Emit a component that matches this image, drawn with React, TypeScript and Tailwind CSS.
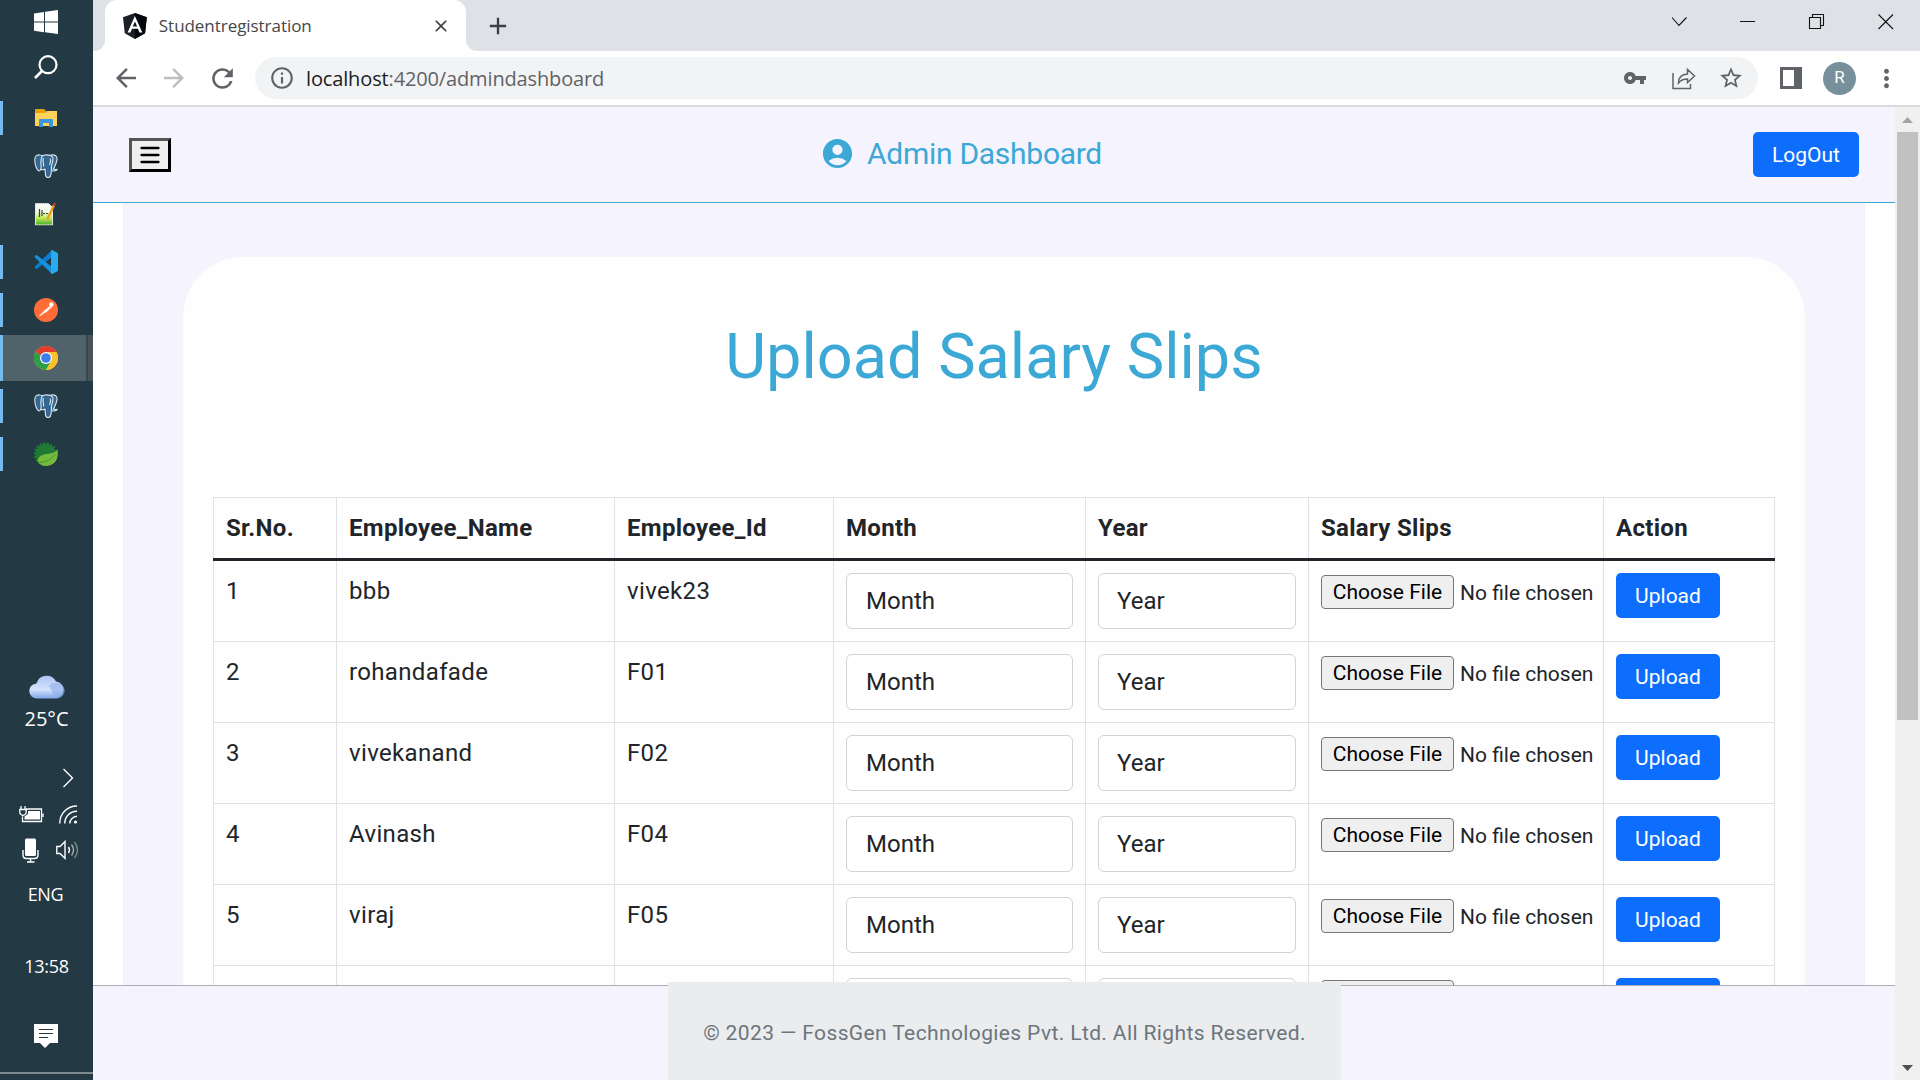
import React from "react";
import {
  MdArrowBack,
  MdArrowForward,
  MdRefresh,
  MdInfoOutline,
  MdVpnKey,
  MdStarBorder,
  MdMoreVert,
  MdAccountCircle,
  MdClose,
  MdAdd,
} from "react-icons/md";

const employees = [
  { no: 1, name: "bbb", id: "vivek23" },
  { no: 2, name: "rohandafade", id: "F01" },
  { no: 3, name: "vivekanand", id: "F02" },
  { no: 4, name: "Avinash", id: "F04" },
  { no: 5, name: "viraj", id: "F05" },
];

const columns = ["Sr.No.", "Employee_Name", "Employee_Id", "Month", "Year", "Salary Slips", "Action"];

function WindowsIcon() {
  return (
    <svg width="24" height="24" viewBox="0 0 24 24" fill="#fff">
      <path d="M0 3.4 10 2v9.6H0zM11 1.8 24 0v11.6H11zM0 12.6h10v9.6L0 20.8zM11 12.6h13V24l-13-1.8z" />
    </svg>
  );
}

function SearchIcon() {
  return (
    <svg width="24" height="24" viewBox="0 0 24 24" fill="none" stroke="#fff" strokeWidth="2.2">
      <circle cx="14" cy="9.7" r="8.5" />
      <path d="M8 16 1 23" strokeWidth="2.6" />
    </svg>
  );
}

function FolderIcon() {
  return (
    <svg width="22" height="20" viewBox="0 0 22 20">
      <path d="M0 1h9l2 2v3H0z" fill="#e8a200" />
      <path d="M0 5h10l2-2h10v15H0z" fill="#ffd35b" />
      <path d="M4 19v-7q0-1 1-1h12q1 0 1 1v7h-4v-4H8v4z" fill="#3a96dd" />
    </svg>
  );
}

function ElephantIcon() {
  return (
    <svg width="24" height="24" viewBox="0 0 24 24" fill="#336791" stroke="#dbe6ed" strokeWidth="1.1" strokeLinejoin="round">
      <path d="M6 1C2 .3.5 3 .8 7c.3 4 2 9.500 4 10 1.300.2 2-1.500 3-2.500L9 2.500Q8 1 6 1z" />
      <path d="M17 1c4-.6 6.500 1 6 4.600-.4 3.400-2 6.400-3.600 9.400 1.500.7 2.800.5 3.800.3-.6 1.500-3 2-5.200 1.500L15 5z" />
      <path d="M8 2.500c1-2 8-2.500 10.500.500 1.500 3-.500 6-1 9-.3 3 .3 7-1 10-.800 2-4 2-4.700 0-.700-2-.4-5-.8-7-1 1-3.300 1-4.300 0C8 12 5.500 8 8 2.500z" />
      <path d="M9.500 4c-1.500 3 .5 5 0 8.500M16 4.500c1.500 2 0 4.500-.5 6.500" fill="none" />
    </svg>
  );
}

function NotepadIcon() {
  return (
    <svg width="24" height="24" viewBox="0 0 24 24">
      <defs>
        <linearGradient id="npp" x1="0" y1="0" x2="0" y2="1">
          <stop offset="0.35" stopColor="#f7fbef" />
          <stop offset="0.7" stopColor="#b5e84b" />
          <stop offset="1" stopColor="#3fae29" />
        </linearGradient>
      </defs>
      <path d="M1.500 1.500h13l4 4v17.500h-17z" fill="url(#npp)" stroke="#e4e6e4" />
      <path d="M2 1.500h13" stroke="#b9bcb9" strokeDasharray="1 1" />
      <path d="M1 23.500h18" stroke="#56615b" />
      <path d="M5.500 7v8M8 8v6M9 11.500h2M12 11.500h2" stroke="#3b4438" strokeWidth="1.200" />
      <path d="m13 18 7-15" stroke="#e9a31b" strokeWidth="2.400" />
      <path d="m20 3.500 1.200-2.700" stroke="#a33b3b" strokeWidth="2.400" />
      <path d="m13.300 17-.8 2.500" stroke="#d9b98a" />
    </svg>
  );
}

function CodeIcon() {
  return (
    <svg width="24" height="24" viewBox="0 0 24 24">
      <path d="M1 16.500 18 0v7L3 18.800q-.7.300-1.200-.1l-1-.9q-.5-.7.200-1.300z" fill="#0a7fcf" />
      <path d="M1 7.600 18 24v-7L3 5.200q-.7-.3-1.200.1l-1 .9Q.3 7 1 7.600z" fill="#1592dc" />
      <path d="M18 0q-.8 0-1 .8v22.400q.2.900 1 .8l5-2.400q1-.5 1-1.500V3.900q0-1-1-1.500z" fill="#2aabf0" />
    </svg>
  );
}

function PostmanIcon() {
  return (
    <svg width="24" height="24" viewBox="0 0 24 24">
      <circle cx="12" cy="12" r="12" fill="#ff6c37" />
      <circle cx="17.300" cy="6.500" r="2.200" fill="#fff" />
      <path d="m15.500 8.200 1.700 1.200-4.800 4.900-4 1.200 1.400-2.600z" fill="#fff" />
      <path d="m9.500 14-4 3.800 4.500-2.600M16.500 9 18 10" stroke="#fff" strokeWidth="0.900" fill="none" />
    </svg>
  );
}

function ChromeIcon() {
  return (
    <svg width="24" height="24" viewBox="0 0 24 24">
      <circle cx="12" cy="12" r="12" fill="#fbc02d" />
      <path d="M12 12 1.600 6A12 12 0 0 1 22.400 6z" fill="#e33b2e" />
      <path d="M12 12 1.600 6A12 12 0 0 0 12 24l5.200-9z" fill="#2f9e4c" />
      <path d="M12 6h10.400A12 12 0 0 1 12 24l5.200-9z" fill="#fbc02d" />
      <circle cx="12" cy="12" r="6" fill="#fff" />
      <circle cx="12" cy="12" r="4.800" fill="#3b7ded" />
    </svg>
  );
}

function SpringIcon() {
  return (
    <svg width="24" height="24" viewBox="0 0 24 24">
      <circle cx="11.500" cy="12" r="10.200" fill="#1f7a35" />
      <circle cx="11.500" cy="12" r="10.800" fill="none" stroke="#1f7a35" strokeWidth="2" strokeDasharray="2.200 1.500" />
      <path d="M23.500 7.500c1.500 9-2 16-11 16.500C8 24 5 22 3.500 19.500 4 14 8.500 12.500 13 12c5-.5 8-1.500 10.500-4.500z" fill="#76bc3c" />
      <path d="M4.500 20.500C11 20.500 17 18 21 12.500" fill="none" stroke="#3c8f35" strokeWidth="1" />
    </svg>
  );
}

const tasks = [
  { icon: <FolderIcon />, open: true },
  { icon: <ElephantIcon />, open: false },
  { icon: <NotepadIcon />, open: false },
  { icon: <CodeIcon />, open: true },
  { icon: <PostmanIcon />, open: true },
  { icon: <ChromeIcon />, open: true, active: true },
  { icon: <ElephantIcon />, open: true },
  { icon: <SpringIcon />, open: true },
];

function Taskbar() {
  return (
    <aside className="flex h-full w-[93px] shrink-0 flex-col bg-[#233943] font-['Open_Sans',sans-serif] text-white">
      <div className="flex h-[44px] items-center pl-[34px]"><WindowsIcon /></div>
      <div className="flex h-[46px] items-center pl-[34px]"><SearchIcon /></div>
      <div className="mt-1 flex flex-col">
        {tasks.map((t, i) => (
          <div key={i} className="flex h-12 items-center">
            <div className={t.open ? (t.active ? "h-[46px] w-[3px] bg-[#76b9ed]" : "h-[34px] w-[3px] bg-[#76b9ed]") : "w-[3px]"} />
            <div className={t.active ? "flex h-[46px] w-[83px] items-center justify-center bg-[#50626a] pr-[9px]" : "flex h-[46px] w-[83px] items-center justify-center pr-[9px]"}>
              <div className="ml-[12px]">{t.icon}</div>
            </div>
            {t.active && <div className="h-[46px] w-[7px] border-l-2 border-[#35474f] bg-[#485459]" />}
          </div>
        ))}
      </div>
      <svg className="mt-[197px] ml-[29px]" width="36" height="24" viewBox="0 0 36 24">
        <defs>
          <linearGradient id="cloud" x1="0" y1="0" x2="0" y2="1">
            <stop offset="0" stopColor="#a9c5f6" />
            <stop offset="0.600" stopColor="#d5e2fa" />
            <stop offset="1" stopColor="#7fa5ea" />
          </linearGradient>
        </defs>
        <path d="M8 23.500a7.500 7.500 0 0 1-.5-15A10.500 10.500 0 0 1 27 6.600a8.500 8.500 0 0 1 0 16.900z" fill="url(#cloud)" />
        <path d="M20 11a9 9 0 0 1 15.800 4c.2 5-3.800 8.500-8.800 8.500z" fill="#86a9e8" opacity="0.550" />
      </svg>
      <div className="mt-[8px] h-[24px] text-center text-[20px] leading-[24px]">25°C</div>
      <svg className="mt-[37px] ml-[62px]" width="12" height="20" viewBox="0 0 12 20" fill="none" stroke="#fff" strokeWidth="1.400">
        <path d="m1.500 1 9 9-9 9" />
      </svg>
      <div className="mt-[15px] flex h-[22px] items-center">
        <svg className="ml-[19px]" width="25" height="19" viewBox="0 0 25 19" fill="none" stroke="#fff" strokeWidth="1.300">
          <path d="M7 4h15.500v12.500H3.500v-5M24 8.500v3.500M2 1v3M6 1v3M.8 4.500h6.400V8Q6 10.500 4 10.500T.8 8z" />
          <path d="M9 6h12v8.500H5.500v-3L9 9z" fill="#fff" stroke="none" />
        </svg>
        <svg className="ml-[15px]" width="19" height="19" viewBox="0 0 19 19" fill="none" stroke="#fff" strokeWidth="1.400">
          <path d="M.8 18.500A17 17 0 0 1 18 1M5.800 18.500A12 12 0 0 1 18 6.200M10.800 18.500A7.500 7.500 0 0 1 18 11.200" />
          <circle cx="16.500" cy="17" r="1.600" fill="#fff" stroke="none" />
        </svg>
      </div>
      <div className="mt-[12px] flex h-[26px] items-center">
        <svg className="ml-[22px]" width="17" height="25" viewBox="0 0 17 25" fill="none" stroke="#fff" strokeWidth="1.400">
          <rect x="3" y="0.500" width="11" height="17.500" rx="1.500" fill="#fff" stroke="none" />
          <path d="M1 12v5q0 3.500 3.500 3.500h8Q16 20.500 16 17v-5M8.500 20.500V24M5 24h7.500" />
        </svg>
        <svg className="ml-[17px]" width="23" height="20" viewBox="0 0 23 20" fill="none" stroke="#fff" strokeWidth="1.400">
          <path d="M.8 6.500v7H4l5 4.800V1.500l-5 5z" />
          <path d="M12.500 7q2 3 0 6" />
          <path d="M15.500 4.500q4 5.500 0 11" opacity="0.600" />
          <path d="M18.500 2q6 8 0 16" opacity="0.400" />
        </svg>
      </div>
      <div className="mt-[19px] h-[24px] pr-[2px] text-center text-[18px] leading-[24px] tracking-[-0.4px]">ENG</div>
      <div className="mt-[48px] h-[24px] text-center text-[18px] leading-[24px] tracking-[-0.3px]">13:58</div>
      <svg className="mt-[46px] ml-[34px]" width="24" height="25" viewBox="0 0 24 25">
        <path d="M0 0h24v19h-8l-5 5-5-5H0z" fill="#fff" />
        <path d="M5 5.500h14M5 9.500h14M5 13.500h9" stroke="#233943" />
      </svg>
      <div className="mt-[23px] h-[2px] bg-[#7b888d]" />
    </aside>
  );
}

function TabStrip() {
  return (
    <div className="flex h-[51px] shrink-0 bg-[#dee1e6]">
      <div className="flex h-full w-3 items-end bg-white">
        <div className="h-full w-full rounded-br-[11px] bg-[#dee1e6]" />
      </div>
      <div className="flex w-[361px] items-center bg-[#dee1e6]">
        <div className="flex h-full w-full items-center rounded-t-[12px] bg-white">
          <svg className="ml-[18px]" width="24" height="26" viewBox="0 0 24 26">
            <path d="m12 0 12 4.300-1.800 16L12 26 1.800 20.300 0 4.300z" fill="#1b1f27" />
            <path d="m12 0 12 4.300-1.800 16L12 26z" fill="#05070d" />
            <path fillRule="evenodd" d="m12 3 7.400 16.500h-2.900L15 15.800H9l-1.500 3.700H4.600zm0 5.500-2.200 5h4.400z" fill="#fff" />
          </svg>
          <span className="ml-[12px] w-[274px] font-['Open_Sans',sans-serif] text-[17px] tracking-[-0.05px] whitespace-nowrap text-[#45474a]">Studentregistration</span>
          <MdClose className="mr-[15px] size-[20px] shrink-0 text-[#3c4043]" />
        </div>
      </div>
      <div className="flex w-3 items-end bg-white">
        <div className="h-full w-full rounded-bl-[11px] bg-[#dee1e6]" />
      </div>
      <div className="flex w-[34px] items-center justify-end"><MdAdd className="size-[28px] shrink-0 text-[#3c4043]" /></div>
      <svg className="ml-auto" width="248" height="51" viewBox="0 0 248 51" fill="none" stroke="#111" strokeWidth="1.100">
        <path d="m0 17.500 7 8 7.500-8M68 21.500h15M137.500 17.500h11v11h-11zM140.500 17v-2.500h11v11h-2.500M206.500 14.500l14.500 14.500M221 14.500 206.500 29" />
      </svg>
    </div>
  );
}

function Toolbar() {
  return (
    <div className="flex h-[56px] shrink-0 items-center border-b-2 border-[#d9dadd] bg-white text-[#5f6368]">
      <MdArrowBack className="ml-[18px] size-[30px]" />
      <MdArrowForward className="ml-[18px] size-[30px] text-[#bcbec1]" />
      <MdRefresh className="ml-[18px] size-[31px]" />
      <div className="ml-[17px] flex h-[42px] w-[1503px] items-center rounded-full bg-[#f1f3f4]">
        <MdInfoOutline className="ml-[14px] size-[26px]" />
        <span className="ml-[11px] pt-[2px] font-['Open_Sans',sans-serif] text-[20px] tracking-[-0.14px] whitespace-nowrap"><span className="text-[#202124]">localhost</span>:4200/admindashboard</span>
        <MdVpnKey className="ml-auto size-[24px]" />
        <svg className="ml-[25px]" width="24" height="23" viewBox="0 0 24 23" fill="none" stroke="#5f6368" strokeWidth="1.500">
          <path d="M1 6v15.500h17.500V17M6.500 16q0-8.500 9-9V2.500l7 6.500-7 6.500V12q-6 0-9 4z" />
        </svg>
        <MdStarBorder className="mr-[14px] ml-[22px] size-[26px]" />
      </div>
      <svg className="ml-[22px]" width="22" height="22" viewBox="0 0 22 22">
        <path fillRule="evenodd" d="M0 0h22v22H0zm3 3v16h11V3z" fill="#5f6368" />
      </svg>
      <div className="ml-[21px] flex size-[33px] items-center justify-center rounded-full bg-[#78909c] font-['Roboto',sans-serif] text-[17px] text-white">R</div>
      <MdMoreVert className="ml-[16px] size-[29px]" />
    </div>
  );
}

const rowGrid = "grid grid-cols-[123px_278px_219px_252px_223px_295px_172px]";

function SlipTable() {
  return (
    <div className="w-[1562px] text-[#212529]">
      <div className={rowGrid + " h-[64px] border-t border-b-[3px] border-t-[#dee2e6] border-b-[#212529]"}>
        {columns.map((c) => (
          <div key={c} className="border-l border-[#dee2e6] pt-[12px] pl-[12px] text-[24px] leading-[36px] font-bold tracking-[0.3px] whitespace-nowrap last:border-r">{c}</div>
        ))}
      </div>
      {employees.map((e) => (
        <div key={e.no} className={rowGrid + " h-[81px] border-b border-[#dee2e6] text-[24px] leading-[36px] *:border-l *:border-[#dee2e6] *:pt-[12px] *:pl-[12px]"}>
          <div>{e.no}</div>
          <div className="tracking-[0.35px]">{e.name}</div>
          <div className="tracking-[0.35px]">{e.id}</div>
          <div><div className="flex h-[56px] w-[227px] items-center rounded-[6px] border border-[#ced4da] bg-white pl-[19px]">Month</div></div>
          <div><div className="flex h-[56px] w-[198px] items-center rounded-[6px] border border-[#ced4da] bg-white pl-[18px]">Year</div></div>
          <div>
            <div className="mt-[2px] flex h-[34px] items-center text-[21px]">
              <button className="h-[34px] w-[133px] rounded-[4px] border border-[#767676] bg-[#efefef] leading-[30px] whitespace-nowrap text-black">Choose File</button>
              <span className="ml-[6px] pt-[2px] whitespace-nowrap">No file chosen</span>
            </div>
          </div>
          <div className="border-r">
            <button className="block h-[45px] w-[104px] rounded-[5px] bg-[#0d6efd] text-[21px] leading-[46px] text-white">Upload</button>
          </div>
        </div>
      ))}
      <div className={rowGrid + " h-[81px] *:border-l *:border-[#dee2e6] *:pt-[12px] *:pl-[12px]"}>
        <div />
        <div />
        <div />
        <div><div className="h-[56px] w-[227px] rounded-[6px] border border-[#ced4da] bg-white" /></div>
        <div><div className="h-[56px] w-[198px] rounded-[6px] border border-[#ced4da] bg-white" /></div>
        <div><div className="mt-[2px] h-[34px] w-[133px] rounded-[4px] border border-[#767676] bg-[#efefef]" /></div>
        <div className="border-r"><div className="h-[45px] w-[104px] rounded-[5px] bg-[#0d6efd]" /></div>
      </div>
    </div>
  );
}

function AdminPage() {
  return (
    <div className="flex h-full w-[1802px] shrink-0 flex-col bg-white">
      <header className="flex h-[96px] shrink-0 items-start border-b border-[#3ba8d5] bg-[#f5f3fe]">
        <button className="mt-[31px] ml-[36px] flex h-[34px] w-[42px] items-center justify-center border-[3px] border-t-[#555] border-r-black border-b-black border-l-[#555] bg-[#efefef]">
          <svg width="20" height="18" viewBox="0 0 20 18" stroke="#000" strokeWidth="2.300" strokeLinecap="round">
            <path d="M1.500 2h17M1.500 9h17M1.500 16h17" />
          </svg>
        </button>
        <div className="mt-[25px] ml-[649px] flex h-[42px] items-center text-[#3ba8d5]">
          <MdAccountCircle className="size-[35px]" />
          <span className="ml-[12px] text-[30px] tracking-[-0.28px] whitespace-nowrap">Admin Dashboard</span>
        </div>
        <button className="mt-[25px] mr-[36px] ml-auto h-[45px] w-[106px] rounded-[5px] bg-[#0d6efd] text-[21px] leading-[46px] text-white">LogOut</button>
      </header>
      <main className="mx-[30px] flex h-[782px] shrink-0 flex-col overflow-hidden bg-[#f5f3fe] px-[60px]">
        <section className="mt-[54px] flex h-[900px] shrink-0 flex-col items-center rounded-t-[60px] bg-[#fefefe]">
          <h1 className="mt-[62px] mb-[102px] h-[76px] text-[63px] leading-[76px] whitespace-nowrap text-[#3ba8d5]">Upload Salary Slips</h1>
          <SlipTable />
        </section>
      </main>
      <footer className="flex h-[95px] shrink-0 justify-center border-t border-[#adacb5] bg-[#f5f3fe]">
        <div className="-mt-1 ml-[21px] flex h-[98px] w-[673px] items-center justify-center bg-[#ebecee] pt-[6px] text-[21px] tracking-[0.38px] whitespace-nowrap text-[#6c757d]">© 2023 — FossGen Technologies Pvt. Ltd. All Rights Reserved.</div>
      </footer>
    </div>
  );
}

function Scrollbar() {
  return (
    <div className="flex h-full w-[25px] shrink-0 flex-col items-center bg-[#f0f0f0]">
      <svg className="mt-[10px]" width="11" height="6" viewBox="0 0 11 6"><path d="M0 6 5.500 0 11 6z" fill="#a3a3a3" /></svg>
      <div className="mt-[9px] h-[588px] w-[21px] bg-[#c1c1c1]" />
      <svg className="mt-auto mb-[9px]" width="11" height="6" viewBox="0 0 11 6"><path d="M0 0h11L5.500 6z" fill="#505050" /></svg>
    </div>
  );
}

export default function App() {
  return (
    <div className="flex h-[1080px] w-[1920px] overflow-hidden bg-white font-['Roboto',sans-serif]">
      <Taskbar />
      <div className="flex min-w-0 flex-1 flex-col">
        <TabStrip />
        <Toolbar />
        <div className="flex min-h-0 flex-1">
          <AdminPage />
          <Scrollbar />
        </div>
      </div>
    </div>
  );
}
